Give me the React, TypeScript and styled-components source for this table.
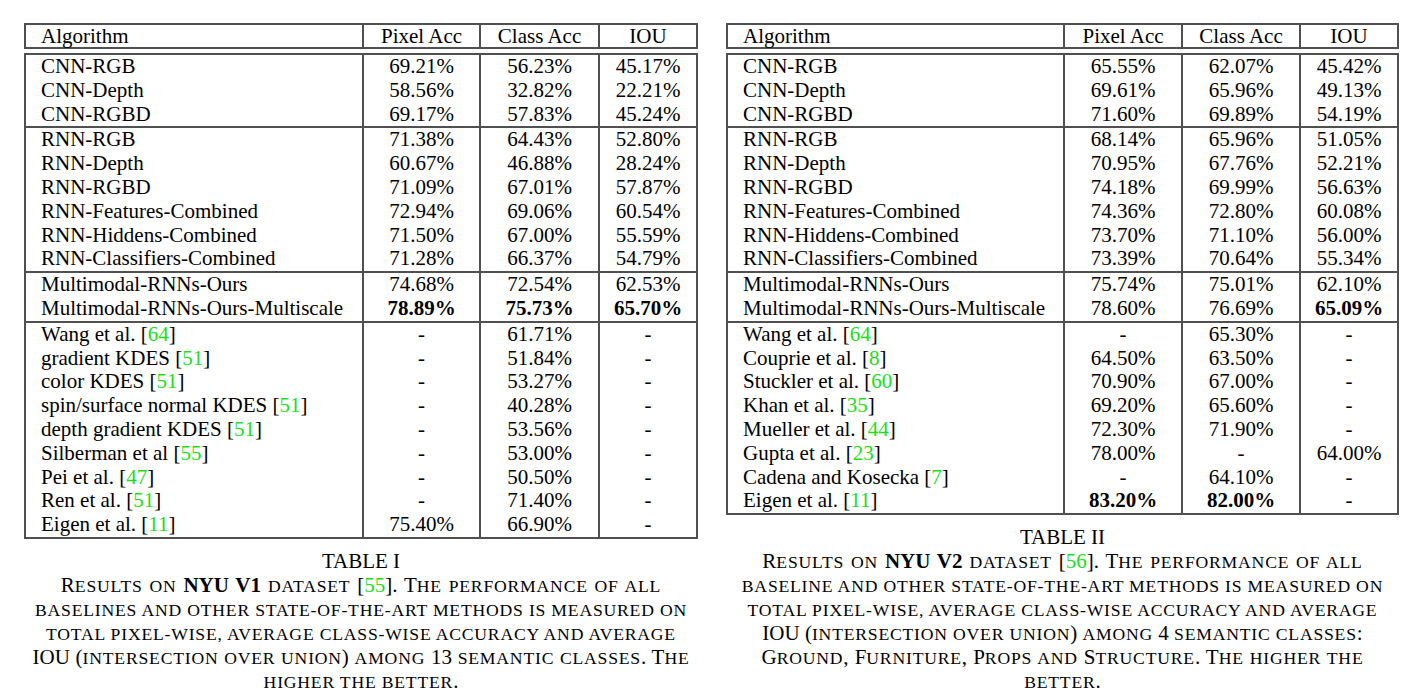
import React from "react";
import styled, { createGlobalStyle } from "styled-components";

const GlobalStyle = createGlobalStyle`
  html, body {
    margin: 0;
    padding: 0;
    background: #ffffff;
  }
  body {
    font-family: "Liberation Serif", "Times New Roman", Times, serif;
    color: #000000;
  }
`;

const RULE = "#505050";

const Page = styled.div`
  display: flex;
  align-items: flex-start;
  gap: 28px;
  padding: 23px 0 0 24px;
`;

const Figure = styled.figure<{ $width: number }>`
  margin: 0;
  width: ${(p) => p.$width}px;
  display: flex;
  flex-direction: column;
`;

const HeaderBox = styled.div`
  border: 2px solid ${RULE};
`;

const BodyBox = styled.div`
  margin-top: 4px;
  border: 2px solid ${RULE};
`;

const Group = styled.div`
  & + & {
    border-top: 2px solid ${RULE};
  }
`;

const Row = styled.div<{ $cols: string }>`
  display: grid;
  grid-template-columns: ${(p) => p.$cols};
`;

const Cell = styled.div<{ $align?: "left" | "center"; $bold?: boolean; $head?: boolean }>`
  box-sizing: border-box;
  height: ${(p) => (p.$head ? "22px" : "23.8px")};
  line-height: ${(p) => (p.$head ? "22.6px" : "23px")};
  padding-left: ${(p) => (p.$align === "left" ? "15px" : "0")};
  font-size: 21px;
  font-weight: ${(p) => (p.$bold ? 700 : 400)};
  text-align: ${(p) => p.$align ?? "center"};
  white-space: nowrap;
  & + & {
    border-left: 2px solid ${RULE};
  }
`;

const Cite = styled.span`
  color: #19e019;
`;

const Caption = styled.figcaption`
  margin-top: 10px;
  font-size: 21px;
  line-height: 24px;
  text-align: center;
  white-space: nowrap;
`;

const CaptionLine = styled.div<{ $spread?: number }>`
  height: 24px;
  word-spacing: ${(p) => p.$spread ?? 0}px;
`;

const Sc = styled.span`
  text-transform: uppercase;
  font-size: 0.84em;
  line-height: 1;
  letter-spacing: 0.8px;
`;

const Strong = styled.strong`
  font-weight: 700;
`;

type Val = { v: string; b?: boolean };
type RowData = { name: string; cite?: string; vals: Val[] };
type Line = { node: React.ReactNode; spread?: number };

const v = (s: string): Val => (s.startsWith("*") ? { v: s.slice(1), b: true } : { v: s });
const r = (name: string, cite: string | undefined, a: string, b: string, c: string): RowData => ({
  name,
  cite,
  vals: [v(a), v(b), v(c)],
});

const table1: RowData[][] = [
  [
    r("CNN-RGB", undefined, "69.21%", "56.23%", "45.17%"),
    r("CNN-Depth", undefined, "58.56%", "32.82%", "22.21%"),
    r("CNN-RGBD", undefined, "69.17%", "57.83%", "45.24%"),
  ],
  [
    r("RNN-RGB", undefined, "71.38%", "64.43%", "52.80%"),
    r("RNN-Depth", undefined, "60.67%", "46.88%", "28.24%"),
    r("RNN-RGBD", undefined, "71.09%", "67.01%", "57.87%"),
    r("RNN-Features-Combined", undefined, "72.94%", "69.06%", "60.54%"),
    r("RNN-Hiddens-Combined", undefined, "71.50%", "67.00%", "55.59%"),
    r("RNN-Classifiers-Combined", undefined, "71.28%", "66.37%", "54.79%"),
  ],
  [
    r("Multimodal-RNNs-Ours", undefined, "74.68%", "72.54%", "62.53%"),
    r("Multimodal-RNNs-Ours-Multiscale", undefined, "*78.89%", "*75.73%", "*65.70%"),
  ],
  [
    r("Wang et al.", "64", "-", "61.71%", "-"),
    r("gradient KDES", "51", "-", "51.84%", "-"),
    r("color KDES", "51", "-", "53.27%", "-"),
    r("spin/surface normal KDES", "51", "-", "40.28%", "-"),
    r("depth gradient KDES", "51", "-", "53.56%", "-"),
    r("Silberman et al", "55", "-", "53.00%", "-"),
    r("Pei et al.", "47", "-", "50.50%", "-"),
    r("Ren et al.", "51", "-", "71.40%", "-"),
    r("Eigen et al.", "11", "75.40%", "66.90%", "-"),
  ],
];

const table2: RowData[][] = [
  [
    r("CNN-RGB", undefined, "65.55%", "62.07%", "45.42%"),
    r("CNN-Depth", undefined, "69.61%", "65.96%", "49.13%"),
    r("CNN-RGBD", undefined, "71.60%", "69.89%", "54.19%"),
  ],
  [
    r("RNN-RGB", undefined, "68.14%", "65.96%", "51.05%"),
    r("RNN-Depth", undefined, "70.95%", "67.76%", "52.21%"),
    r("RNN-RGBD", undefined, "74.18%", "69.99%", "56.63%"),
    r("RNN-Features-Combined", undefined, "74.36%", "72.80%", "60.08%"),
    r("RNN-Hiddens-Combined", undefined, "73.70%", "71.10%", "56.00%"),
    r("RNN-Classifiers-Combined", undefined, "73.39%", "70.64%", "55.34%"),
  ],
  [
    r("Multimodal-RNNs-Ours", undefined, "75.74%", "75.01%", "62.10%"),
    r("Multimodal-RNNs-Ours-Multiscale", undefined, "78.60%", "76.69%", "*65.09%"),
  ],
  [
    r("Wang et al.", "64", "-", "65.30%", "-"),
    r("Couprie et al.", "8", "64.50%", "63.50%", "-"),
    r("Stuckler et al.", "60", "70.90%", "67.00%", "-"),
    r("Khan et al.", "35", "69.20%", "65.60%", "-"),
    r("Mueller et al.", "44", "72.30%", "71.90%", "-"),
    r("Gupta et al.", "23", "78.00%", "-", "64.00%"),
    r("Cadena and Kosecka", "7", "-", "64.10%", "-"),
    r("Eigen et al.", "11", "*83.20%", "*82.00%", "-"),
  ],
];

const caption1: Line[] = [
  { node: <>TABLE I</> },
  {
    spread: 1.6,
    node: (
      <>
        R<Sc>esults on</Sc> <Strong>NYU V1</Strong> <Sc>dataset</Sc> [<Cite>55</Cite>]. T
        <Sc>he performance of all</Sc>
      </>
    ),
  },
  { node: <Sc>baselines and other state-of-the-art methods is measured on</Sc> },
  { node: <Sc>total pixel-wise, average class-wise accuracy and average</Sc> },
  {
    spread: 0.5,
    node: (
      <>
        IOU (<Sc>intersection over union</Sc>) <Sc>among</Sc> 13 <Sc>semantic classes</Sc>. T<Sc>he</Sc>
      </>
    ),
  },
  {
    node: (
      <>
        <Sc>higher the better</Sc>.
      </>
    ),
  },
];

const caption2: Line[] = [
  { node: <>TABLE II</> },
  {
    spread: 1.6,
    node: (
      <>
        R<Sc>esults on</Sc> <Strong>NYU V2</Strong> <Sc>dataset</Sc> [<Cite>56</Cite>]. T
        <Sc>he performance of all</Sc>
      </>
    ),
  },
  { node: <Sc>baseline and other state-of-the-art methods is measured on</Sc> },
  { node: <Sc>total pixel-wise, average class-wise accuracy and average</Sc> },
  {
    node: (
      <>
        IOU (<Sc>intersection over union</Sc>) <Sc>among</Sc> 4 <Sc>semantic classes</Sc>:
      </>
    ),
  },
  {
    spread: 0.8,
    node: (
      <>
        G<Sc>round</Sc>, F<Sc>urniture</Sc>, P<Sc>rops and</Sc> S<Sc>tructure</Sc>. T<Sc>he higher the</Sc>
      </>
    ),
  },
  {
    node: (
      <>
        <Sc>better</Sc>.
      </>
    ),
  },
];

type TableProps = {
  width: number;
  cols: string;
  groups: RowData[][];
  caption: Line[];
};

function ResultsTable({ width, cols, groups, caption }: TableProps) {
  return (
    <Figure $width={width}>
      <HeaderBox>
        <Row $cols={cols}>
          <Cell $head $align="left">Algorithm</Cell>
          <Cell $head>Pixel Acc</Cell>
          <Cell $head>Class Acc</Cell>
          <Cell $head>IOU</Cell>
        </Row>
      </HeaderBox>
      <BodyBox>
        {groups.map((g, gi) => (
          <Group key={gi}>
            {g.map((row, ri) => (
              <Row $cols={cols} key={ri}>
                <Cell $align="left">
                  {row.name}
                  {row.cite && (
                    <>
                      {" "}[<Cite>{row.cite}</Cite>]
                    </>
                  )}
                </Cell>
                {row.vals.map((val, vi) => (
                  <Cell key={vi} $bold={val.b}>
                    {val.v}
                  </Cell>
                ))}
              </Row>
            ))}
          </Group>
        ))}
      </BodyBox>
      <Caption>
        {caption.map((line, i) => (
          <CaptionLine key={i} $spread={line.spread}>
            {line.node}
          </CaptionLine>
        ))}
      </Caption>
    </Figure>
  );
}

export default function App() {
  return (
    <>
      <GlobalStyle />
      <Page>
        <ResultsTable width={674} cols="336px 117px 119px 98px" groups={table1} caption={caption1} />
        <ResultsTable width={673} cols="335px 118px 118px 98px" groups={table2} caption={caption2} />
      </Page>
    </>
  );
}
